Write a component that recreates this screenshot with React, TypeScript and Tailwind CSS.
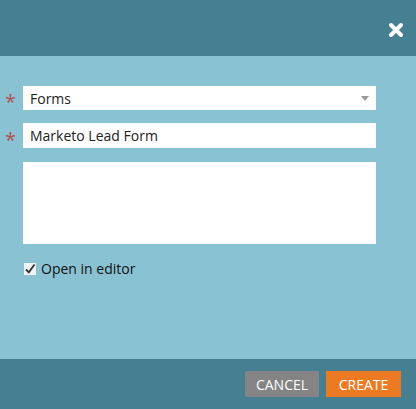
import React from "react";

export default function App() {
  return (
    <div
      className="w-[416px] h-[409px] flex flex-col bg-[#89c2d3]"
      style={{ fontFamily: '"Open Sans", "Noto Sans", sans-serif' }}
    >
      <div className="h-[56px] bg-[#467f91] flex items-center justify-end pr-[12px] pt-[4px]">
        <svg width="16" height="16" viewBox="0 0 16 16">
          <path d="M3 3 L13 13 M13 3 L3 13" stroke="#fff" strokeWidth="4" strokeLinecap="round" />
        </svg>
      </div>
      <div className="flex-1 flex flex-col pt-[30px]">
        <div className="flex items-center h-[24px]">
          <span className="w-[23px] pl-[5px] text-[#b4504f] text-[20px] leading-none pt-[8px]">*</span>
          <div className="w-[353px] h-[24px] bg-white flex items-center justify-between pl-[7px] pr-[7px]">
            <span className="text-[14px] text-[#222]">Forms</span>
            <svg width="8" height="5" viewBox="0 0 8 5">
              <path d="M0 0 L8 0 L4 5 Z" fill="#999" />
            </svg>
          </div>
        </div>
        <div className="flex items-center h-[25px] mt-[13px]">
          <span className="w-[23px] pl-[5px] text-[#b4504f] text-[20px] leading-none pt-[8px]">*</span>
          <div className="w-[353px] h-[25px] bg-white flex items-center pl-[7px]">
            <span className="text-[14px] text-[#222]">Marketo Lead Form</span>
          </div>
        </div>
        <div className="ml-[23px] w-[353px] h-[82px] bg-white mt-[14px]" />
        <div className="flex items-center ml-[24px] mt-[14px] gap-[5px]">
          <div className="w-[12px] h-[12px] bg-[#eef2f3] flex items-center justify-center">
            <svg width="12" height="12" viewBox="0 0 12 12">
              <path d="M2 6.5 L4.8 9.3 L10.5 1.5" stroke="#333" strokeWidth="1.8" fill="none" />
            </svg>
          </div>
          <span className="text-[14px] text-[#111]">Open in editor</span>
        </div>
      </div>
      <div className="h-[50px] bg-[#467f91] flex items-start justify-end pt-[12px] pr-[15px] gap-[7px]">
        <button className="w-[74px] h-[26px] bg-[#848484] text-white text-[14px] flex items-center justify-center">
          CANCEL
        </button>
        <button className="w-[75px] h-[26px] bg-[#ec7a23] text-white text-[14px] flex items-center justify-center">
          CREATE
        </button>
      </div>
    </div>
  );
}
